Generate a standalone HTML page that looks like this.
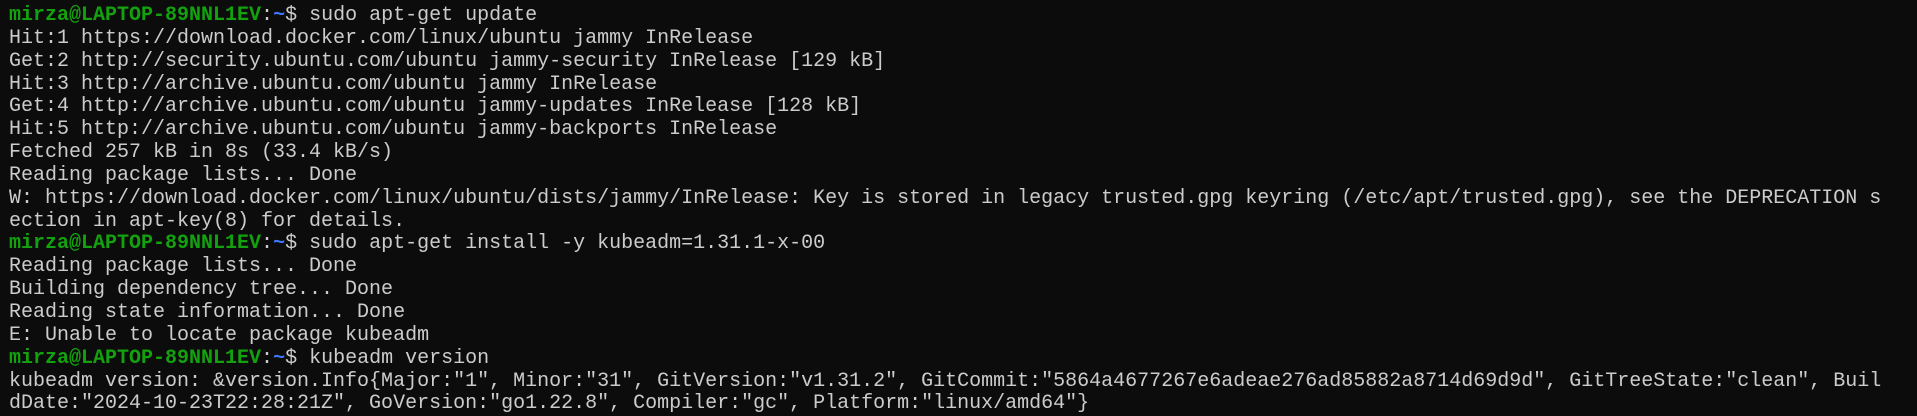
<!DOCTYPE html><html><head><style>
body{margin:0;background:#0c0c0c;width:1917px;height:416px;overflow:hidden}
pre{margin:0;padding:5px 0 0 9px;font-family:"Liberation Mono",monospace;font-size:20px;line-height:22.85px;color:#cccccc}
.g{color:#13a10e;font-weight:bold}.b{color:#3b78ff;font-weight:bold}
</style></head><body><pre><span class="g">mirza@LAPTOP-89NNL1EV</span>:<span class="b">~</span>$ sudo apt-get update
Hit:1 https://download.docker.com/linux/ubuntu jammy InRelease
Get:2 http://security.ubuntu.com/ubuntu jammy-security InRelease [129 kB]
Hit:3 http://archive.ubuntu.com/ubuntu jammy InRelease
Get:4 http://archive.ubuntu.com/ubuntu jammy-updates InRelease [128 kB]
Hit:5 http://archive.ubuntu.com/ubuntu jammy-backports InRelease
Fetched 257 kB in 8s (33.4 kB/s)
Reading package lists... Done
W: https://download.docker.com/linux/ubuntu/dists/jammy/InRelease: Key is stored in legacy trusted.gpg keyring (/etc/apt/trusted.gpg), see the DEPRECATION s
ection in apt-key(8) for details.
<span class="g">mirza@LAPTOP-89NNL1EV</span>:<span class="b">~</span>$ sudo apt-get install -y kubeadm=1.31.1-x-00
Reading package lists... Done
Building dependency tree... Done
Reading state information... Done
E: Unable to locate package kubeadm
<span class="g">mirza@LAPTOP-89NNL1EV</span>:<span class="b">~</span>$ kubeadm version
kubeadm version: &amp;version.Info{Major:"1", Minor:"31", GitVersion:"v1.31.2", GitCommit:"5864a4677267e6adeae276ad85882a8714d69d9d", GitTreeState:"clean", Buil
dDate:"2024-10-23T22:28:21Z", GoVersion:"go1.22.8", Compiler:"gc", Platform:"linux/amd64"}
</pre></body></html>
